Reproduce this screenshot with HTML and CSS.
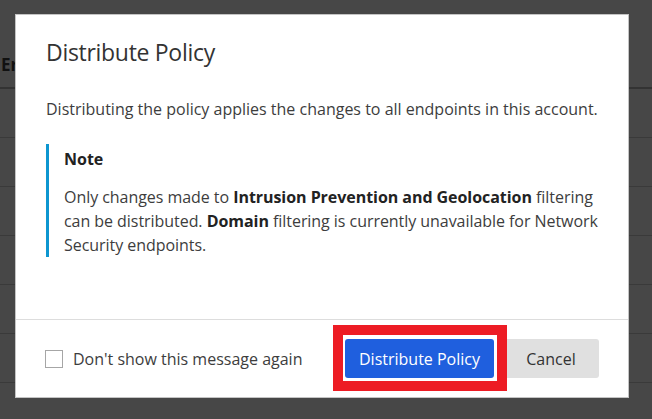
FILE: index.html
```html
<!DOCTYPE html>
<html lang="en">
<head>
<meta charset="utf-8">
<title>Distribute Policy</title>
<link rel="stylesheet" href="styles.css">
</head>
<body>
<div class="page">
  <table class="grid">
    <thead>
      <tr><th>Errors</th><th></th></tr>
    </thead>
    <tbody>
      <tr><td></td><td></td></tr>
      <tr><td></td><td></td></tr>
      <tr><td></td><td></td></tr>
      <tr><td></td><td></td></tr>
      <tr><td></td><td></td></tr>
      <tr><td></td><td></td></tr>
    </tbody>
  </table>

  <div class="overlay">
    <div class="modal" role="dialog" aria-labelledby="dlg-title">
      <div class="modal-header">
        <h2 id="dlg-title" class="modal-title">Distribute Policy</h2>
      </div>
      <div class="modal-body">
        <p class="intro">Distributing the policy applies the changes to all endpoints in this account.</p>
        <div class="note">
          <div class="note-title">Note</div>
          <p class="note-text">Only changes made to <b>Intrusion Prevention and Geolocation</b> filtering<br>can be distributed. <b>Domain</b> filtering is currently unavailable for Network Security endpoints.</p>
        </div>
      </div>
      <div class="modal-footer">
        <label class="check">
          <span class="box"></span>
          <span class="check-label">Don't show this message again</span>
        </label>
        <div class="actions">
          <span class="highlight">
            <button class="btn btn-primary">Distribute Policy</button>
          </span>
          <button class="btn btn-secondary">Cancel</button>
        </div>
      </div>
    </div>
  </div>
</div>
</body>
</html>
```

FILE: styles.css
```css
html, body {
  margin: 0;
  padding: 0;
}
body {
  background: #474747;
  font-family: "Open Sans", "Noto Sans", "Liberation Sans", sans-serif;
  color: #333;
  width: 652px;
  height: 419px;
  overflow: hidden;
}
.page {
  position: relative;
  width: 652px;
  height: 419px;
}
.grid {
  width: 100%;
  border-collapse: collapse;
}
.grid th {
  height: 88px;
  text-align: left;
  padding: 42px 0 0 1px;
  font-size: 17px;
  font-weight: 700;
  color: #111;
  border-bottom: 2px solid #333;
  vertical-align: middle;
  box-sizing: border-box;
}
.grid td {
  height: 49px;
  border-bottom: 1px solid #3a3a3a;
  box-sizing: border-box;
}
.overlay {
  position: absolute;
  left: 15px;
  top: 14px;
}
.modal {
  width: 614px;
  height: 384px;
  box-sizing: border-box;
  background: #fff;
  border: 1px solid #c4c4c4;
  display: flex;
  flex-direction: column;
}
.modal-header {
  padding: 21px 30px 0 30px;
}
.modal-title {
  margin: 0;
  font-size: 23px;
  font-weight: 400;
  line-height: 32px;
  color: #333;
  letter-spacing: -0.3px;
}
.modal-body {
  flex: 1;
  padding: 29px 26px 0 30px;
}
.intro {
  margin: 0;
  font-size: 16px;
  line-height: 24px;
  color: #3d3d3d;
}
.note {
  margin-top: 23px;
  border-left: 3px solid #0d96d0;
  padding: 3px 0 0 15px;
}
.note-title {
  font-size: 16px;
  font-weight: 700;
  line-height: 24px;
  color: #222;
}
.note-text {
  margin: 15px 0 -4px 0;
  font-size: 16px;
  line-height: 23.8px;
  letter-spacing: -0.05px;
  color: #3d3d3d;
}
.note-text b {
  color: #222;
}
.modal-footer {
  height: 78px;
  box-sizing: border-box;
  border-top: 1px solid #dddddd;
  padding: 0 29px 0 29px;
  display: flex;
  align-items: center;
  justify-content: space-between;
}
.check {
  display: flex;
  align-items: center;
  gap: 10px;
}
.box {
  width: 18px;
  height: 18px;
  box-sizing: border-box;
  border: 1px solid #a6a6a6;
  background: #fff;
}
.check-label {
  font-size: 16px;
  color: #3d3d3d;
}
.actions {
  display: flex;
  align-items: center;
  gap: 9px;
}
.highlight {
  position: relative;
  display: inline-flex;
}
.highlight::after {
  content: "";
  position: absolute;
  left: -12px;
  right: -13px;
  top: -14px;
  bottom: -13px;
  border: 10px solid #ed1c24;
  box-sizing: border-box;
  pointer-events: none;
  z-index: 2;
}
.btn {
  height: 39px;
  border: 0;
  border-radius: 3px;
  font-family: inherit;
  font-size: 16px;
  padding: 0 10px;
  white-space: nowrap;
}
.btn-primary {
  width: 149px;
  background: #1f5fde;
  color: #fff;
}
.btn-secondary {
  width: 96px;
  background: #e0e0e0;
  color: #333;
}
```
